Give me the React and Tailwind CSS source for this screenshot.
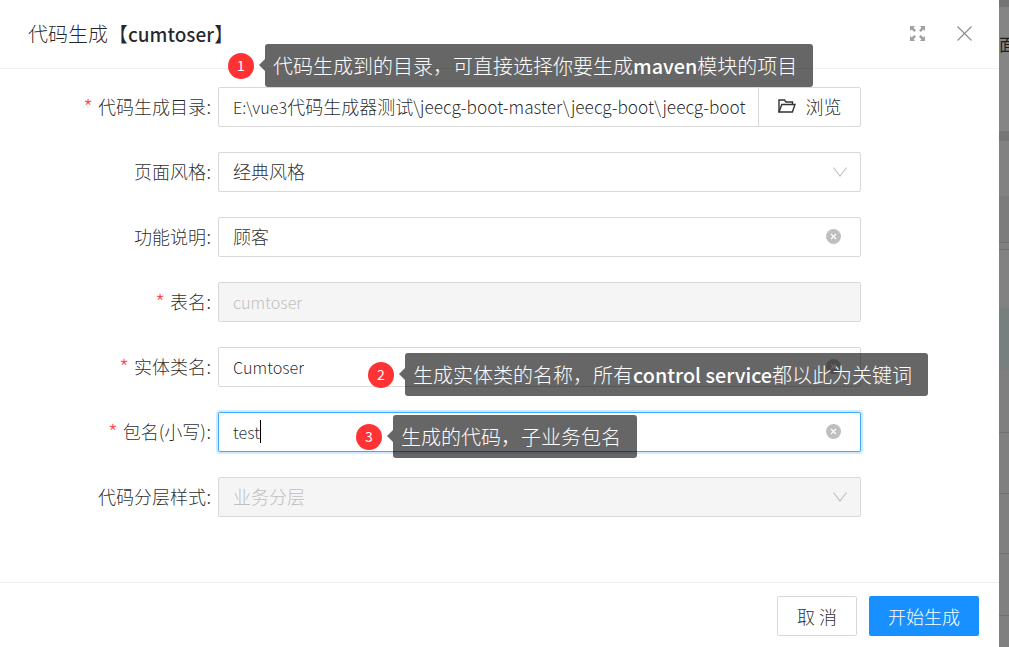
import React from "react";

const font = { fontFamily: '"Noto Sans CJK SC", "Noto Sans", sans-serif' };

function L({ children }) {
  return <span className="text-[16.2px]">{children}</span>;
}

function B({ children }) {
  return <span className="text-[19.8px] font-medium">{children}</span>;
}

function Chevron() {
  return (
    <svg width="14" height="10" viewBox="0 0 14 10" fill="none" stroke="#bfbfbf" strokeWidth="1.1" className="absolute right-[14px] top-[15px]">
      <path d="M0.5 0.5 L7 9 L13.5 0.5" />
    </svg>
  );
}

function Clear() {
  return (
    <svg width="15" height="15" viewBox="0 0 15 15" className="absolute right-[20px] top-[12px]">
      <circle cx="7.5" cy="7.5" r="7.5" fill="#bfbfbf" />
      <path d="M5 5 L10 10 M10 5 L5 10" stroke="#fff" strokeWidth="1.2" />
    </svg>
  );
}

function Row({ label, required, children }) {
  return (
    <div className="flex items-center h-10 mb-[25px]">
      <label className="w-[218px] h-10 shrink-0 pr-[7px] pb-[2px] flex justify-end items-center text-[18px] font-light text-[#000000d9] whitespace-nowrap">
        {required && <span className="text-[#ff4d4f] mr-[5px] text-[22px] leading-none">*</span>}
        {label}
        <span className="ml-[0.5px]">:</span>
      </label>
      <div className="relative w-[643px] h-10">{children}</div>
    </div>
  );
}

function Field({ value, disabled, focus, children }) {
  const cls = disabled
    ? "bg-[#f5f5f5] border-[#d9d9d9] text-[#bfbfbf]"
    : focus
    ? "bg-white border-[#40a9ff] text-[#000000d9] shadow-[0_0_0_2px_rgba(24,144,255,0.2)]"
    : "bg-white border-[#d9d9d9] text-[#000000d9]";
  return (
    <div className={`w-full h-10 border rounded-[2px] pl-[14px] pb-[2px] flex items-center text-[18px] font-light ${cls}`}>
      <span className="whitespace-nowrap overflow-hidden">{value}</span>
      {children}
    </div>
  );
}

function Tip({ n, children, className }) {
  return (
    <div className={`absolute flex items-center ${className}`}>
      <div className="w-[26px] h-[26px] rounded-full bg-[#ff3333] text-white text-[14px] flex items-center justify-center">{n}</div>
      <div className="relative ml-[11px] h-[43px] rounded-[3px] bg-[#000000]/60 text-white text-[20px] font-light pl-[8px] pr-[16px] flex items-center whitespace-nowrap">
        <div className="absolute left-[-6px] top-[15px] w-0 h-0 border-y-[6px] border-y-transparent border-r-[6px] border-r-[#000000]/60" />
        <span>{children}</span>
      </div>
    </div>
  );
}

const strip = [
  ["h-[7px]", "bg-[#747474]"],
  ["h-[124px]", "bg-[#858585]"],
  ["h-[10px]", "bg-[#767676]"],
  ["h-[55px]", "bg-[#828282]"],
  ["h-[46px]", "bg-[#7c7c7c]"],
  ["h-[1px]", "bg-[#6f6f6f]"],
  ["h-[6px]", "bg-[#808080]"],
  ["h-[1px]", "bg-[#707070]"],
  ["h-[58px]", "bg-[#828282]"],
  ["h-[62px]", "bg-[#77807f]"],
  ["h-[62px]", "bg-[#7f7f7f]"],
  ["h-[1px]", "bg-[#707070]"],
  ["h-[60px]", "bg-[#808080]"],
  ["h-[1px]", "bg-[#707070]"],
  ["h-[59px]", "bg-[#808080]"],
  ["h-[1px]", "bg-[#707070]"],
  ["h-[61px]", "bg-[#808080]"],
  ["h-[1px]", "bg-[#707070]"],
  ["h-[31px]", "bg-[#808080]"],
];

export default function App() {
  return (
    <div className="relative w-[1009px] h-[647px] overflow-hidden flex bg-white" style={font}>
      <div className="w-[999px] h-full flex flex-col bg-white">
        <header className="h-[69px] shrink-0 border-b border-[#f0f0f0] flex items-center justify-between pl-[28px] pr-[27px]">
          <h1 className="text-[20px] font-light text-[#000000d9] whitespace-nowrap">
            代码生成【<span className="text-[19px] font-medium">cumtoser</span>】
          </h1>
          <div className="flex items-center gap-[31px] mb-[2px]">
            <svg width="17" height="17" viewBox="0 0 17 17" fill="#a0a0a0">
              <path d="M1 1 H6 L4.5 2.7 L7 5.2 L5.2 7 L2.7 4.5 L1 6 Z" />
              <path d="M16 1 H11 L12.5 2.7 L10 5.2 L11.8 7 L14.3 4.5 L16 6 Z" />
              <path d="M1 16 H6 L4.5 14.3 L7 11.8 L5.2 10 L2.7 12.5 L1 11 Z" />
              <path d="M16 16 H11 L12.5 14.3 L10 11.8 L11.8 10 L14.3 12.5 L16 11 Z" />
            </svg>
            <svg width="15" height="15" viewBox="0 0 15 15" fill="none" stroke="#8c8c8c" strokeWidth="1.1">
              <path d="M0.5 0.5 L14.5 14.5 M14.5 0.5 L0.5 14.5" />
            </svg>
          </div>
        </header>
        <main className="flex-1 pt-[18px]">
          <Row label="代码生成目录" required>
            <div className="flex h-10 w-full">
              <div className="flex-1 min-w-0 h-10 border border-[#d9d9d9] rounded-l-[2px] pl-[14px] pb-[2px] flex items-center text-[18px] font-light text-[#000000d9] overflow-hidden whitespace-nowrap">
                <span>
                  <L>E:\vue3</L>代码生成器测试<span className="text-[17.25px]">\jeecg-boot-master\jeecg-boot\jeecg-boot</span>
                </span>
              </div>
              <button className="w-[103px] h-10 -ml-px border border-[#d9d9d9] rounded-r-[2px] pb-[2px] flex items-center justify-center gap-[10px] text-[18px] font-light text-[#000000d9] bg-white">
                <svg width="18" height="14" viewBox="0 0 18 14" fill="none" stroke="#333" strokeWidth="1.4">
                  <path d="M1 13 V1 H6.5 L8 3 H14.5 V5.5" />
                  <path d="M1 13 L3.8 5.5 H17 L14.4 13 Z" />
                </svg>
                浏览
              </button>
            </div>
          </Row>
          <Row label="页面风格">
            <Field value="经典风格"><Chevron /></Field>
          </Row>
          <Row label="功能说明">
            <Field value="顾客"><Clear /></Field>
          </Row>
          <Row label="表名" required>
            <Field value={<L>cumtoser</L>} disabled />
          </Row>
          <Row label="实体类名" required>
            <Field value={<L>Cumtoser</L>}><Clear /></Field>
          </Row>
          <Row label="包名(小写)" required>
            <Field value={<L>test</L>} focus>
              <span className="w-px h-[23px] bg-black" />
              <Clear />
            </Field>
          </Row>
          <Row label="代码分层样式">
            <Field value="业务分层" disabled><Chevron /></Field>
          </Row>
        </main>
        <footer className="h-[65px] shrink-0 border-t border-[#f0f0f0] flex items-start justify-end gap-[12px] pt-[13px] pr-[20px]">
          <button className="w-[80px] h-10 border border-[#d9d9d9] rounded-[2px] bg-white text-[18px] font-light text-[#000000d9] tracking-[4px] pl-[4px]">取消</button>
          <button className="w-[110px] h-10 rounded-[2px] bg-[#1890ff] text-white text-[18px] font-light">开始生成</button>
        </footer>
      </div>
      <aside className="w-[10px] h-full relative overflow-hidden flex flex-col">
        {strip.map(([h, c], i) => (
          <div key={i} className={`${h} ${c} shrink-0`} />
        ))}
        <span className="absolute left-0 top-[31px] text-[17px] text-[#1f1f1f] whitespace-nowrap">面向</span>
      </aside>
      <Tip n="1" className="left-[228px] top-[44px]">
        代码生成到的目录，可直接选择你要生成<B>maven</B>模块的项目
      </Tip>
      <Tip n="2" className="left-[368px] top-[353px]">
        生成实体类的名称，所有<B>control service</B>都以此为关键词
      </Tip>
      <Tip n="3" className="left-[356px] top-[415px]">
        生成的代码，子业务包名
      </Tip>
    </div>
  );
}
